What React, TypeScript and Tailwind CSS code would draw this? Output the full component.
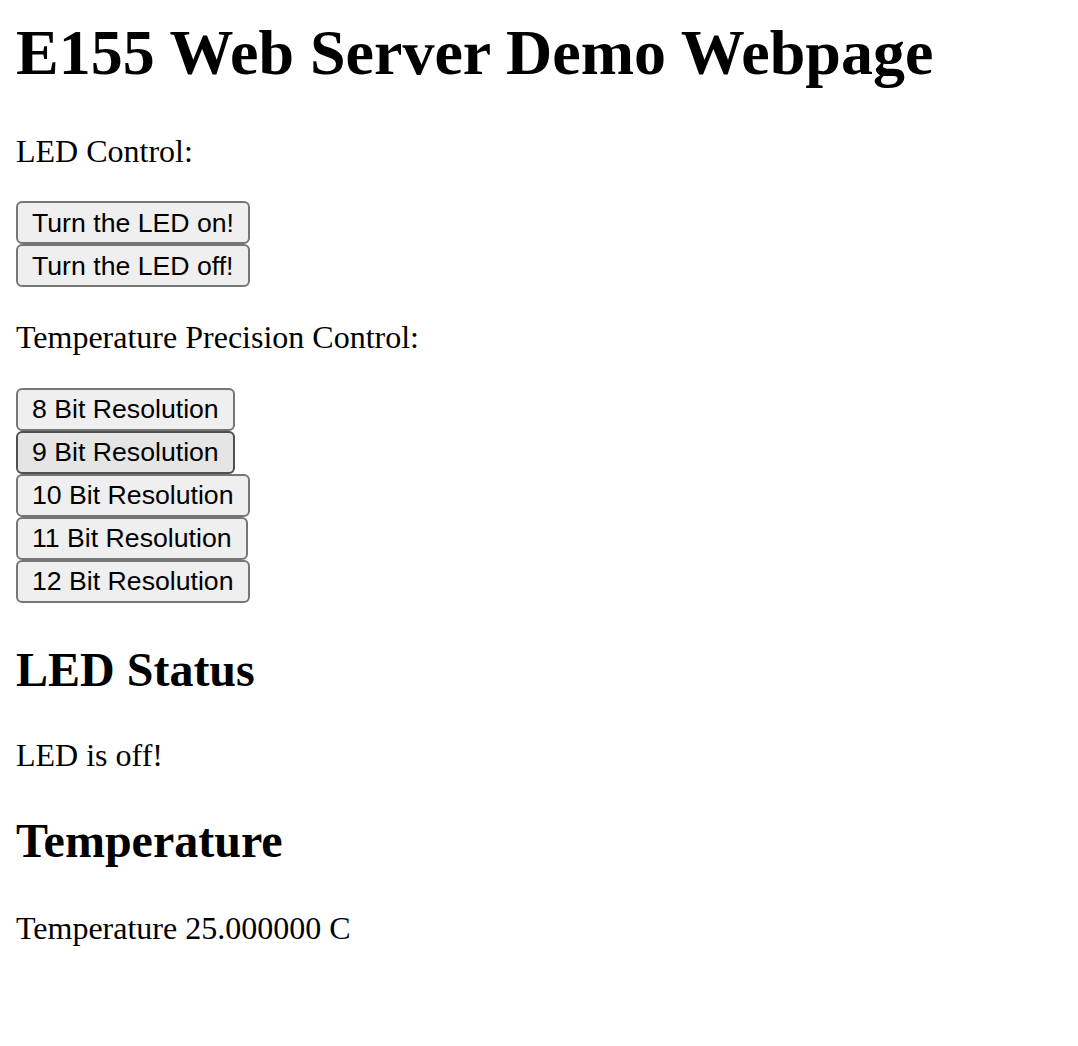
const RESOLUTIONS = [8, 9, 10, 11, 12];

function Btn({ label, hover }: { label: string; hover?: boolean }) {
  return (
    <div>
      <button
        type="button"
        className={`h-[43px] rounded-[6px] border-2 px-[14px] text-[26.67px] leading-none text-black font-['Liberation_Sans',Arial,sans-serif] ${
          hover ? "border-[#4f4f4f] bg-[#e5e5e5]" : "border-[#767676] bg-[#efefef]"
        }`}
      >
        {label}
      </button>
    </div>
  );
}

export default function App() {
  return (
    <div className="min-h-[1046px] bg-white px-4 pt-[16px] text-black font-['Liberation_Serif','Times_New_Roman',serif]">
      <h1 className="text-[64px] font-bold leading-[1.15]">E155 Web Server Demo Webpage</h1>

      <p className="mt-[43px] mb-8 text-[32px] leading-[1.15]">LED Control:</p>
      <Btn label="Turn the LED on!" />
      <Btn label="Turn the LED off!" />

      <p className="my-8 text-[32px] leading-[1.15]">Temperature Precision Control:</p>
      {RESOLUTIONS.map((r) => (
        <Btn key={r} label={`${r} Bit Resolution`} hover={r === 9} />
      ))}

      <h2 className="mt-[39px] text-[48px] font-bold leading-[1.15]">LED Status</h2>
      <p className="mt-[40px] mb-[39px] text-[32px] leading-[1.15]">LED is off!</p>

      <h2 className="text-[48px] font-bold leading-[1.15]">Temperature</h2>
      <p className="mt-[42px] text-[32px] leading-[1.15]">Temperature 25.000000 C</p>
    </div>
  );
}
